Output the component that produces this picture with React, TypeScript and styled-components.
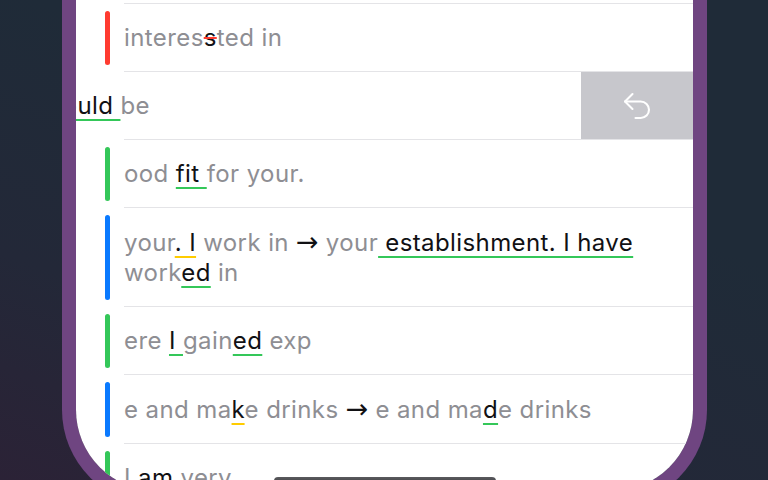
import styled, { createGlobalStyle } from "styled-components";
import { Undo2 } from "lucide-react";

type Kind = "plain" | "fix" | "style" | "del" | "mark" | "arrow";

interface Seg {
  t: string;
  k?: Kind;
}

interface Item {
  bar: string;
  segs: Seg[];
}

const RED = "#ff3b30";
const GREEN = "#34c759";
const BLUE = "#0a7aff";

const items: Item[] = [
  { bar: GREEN, segs: [{ t: "experience in customer service" }] },
  {
    bar: RED,
    segs: [{ t: "interes" }, { t: "s", k: "del" }, { t: "ted in" }],
  },
];

const after: Item[] = [
  {
    bar: GREEN,
    segs: [{ t: "ood " }, { t: "fit ", k: "fix" }, { t: "for your." }],
  },
  {
    bar: BLUE,
    segs: [
      { t: "your" },
      { t: ". I", k: "style" },
      { t: " work in " },
      { t: "→", k: "arrow" },
      { t: " your" },
      { t: " establishment. I have", k: "fix" },
      { t: " work" },
      { t: "ed", k: "fix" },
      { t: " in" },
    ],
  },
  {
    bar: GREEN,
    segs: [
      { t: "ere " },
      { t: "I ", k: "fix" },
      { t: "gain" },
      { t: "ed", k: "fix" },
      { t: " exp" },
    ],
  },
  {
    bar: BLUE,
    segs: [
      { t: "e and ma" },
      { t: "k", k: "style" },
      { t: "e drinks " },
      { t: "→", k: "arrow" },
      { t: " e and ma" },
      { t: "d", k: "fix" },
      { t: "e drinks" },
    ],
  },
  {
    bar: GREEN,
    segs: [{ t: "I " }, { t: "am", k: "mark" }, { t: " very" }],
  },
];

const GlobalStyle = createGlobalStyle`
  html, body {
    margin: 0;
    padding: 0;
  }
  body {
    width: 768px;
    height: 480px;
    overflow: hidden;
    background: linear-gradient(200deg, #1f2b38 35%, #232838 70%, #2b2236 100%);
    font-family: Inter, "Noto Sans", sans-serif;
    -webkit-font-smoothing: antialiased;
  }
`;

const Frame = styled.div`
  box-sizing: border-box;
  margin-left: 62px;
  width: 645px;
  height: 505px;
  border: 14px solid #6f4581;
  border-top: 0;
  border-radius: 0 0 95px 95px;
`;

const Screen = styled.div`
  position: relative;
  height: 100%;
  background: #fff;
  border-radius: 0 0 81px 81px;
  overflow: hidden;
`;

const List = styled.div`
  margin-top: -64px;
  display: flex;
  flex-direction: column;
`;

const Row = styled.div`
  display: flex;
  padding-left: 29px;
`;

const Bar = styled.div<{ $color: string }>`
  flex-shrink: 0;
  width: 5px;
  margin: 7px 14px 7px 0;
  border-radius: 3px;
  background: ${(p) => p.$color};
`;

const Text = styled.div`
  flex: 1;
  padding: 19px 16px 18px 0;
  border-bottom: 1px solid #e4e4e7;
  font-size: 24px;
  line-height: 30px;
  letter-spacing: 0.4px;
  color: #8e8e93;
`;

const Seg = styled.span<{ $kind: Kind }>`
  color: ${(p) => (p.$kind === "plain" ? "#8e8e93" : "#111114")};
  font-family: ${(p) =>
    p.$kind === "arrow" ? `"DejaVu Sans", sans-serif` : "inherit"};
  font-size: ${(p) => (p.$kind === "arrow" ? "27px" : "inherit")};
  letter-spacing: ${(p) => (p.$kind === "arrow" ? "0" : "inherit")};
  text-decoration-line: ${(p) =>
    p.$kind === "fix" || p.$kind === "style"
      ? "underline"
      : p.$kind === "del"
      ? "line-through"
      : "none"};
  text-decoration-color: ${(p) =>
    p.$kind === "style" ? "#ffcc00" : p.$kind === "del" ? RED : GREEN};
  text-decoration-thickness: 1.5px;
  text-underline-offset: 5px;
`;

const SwipeRow = styled.div`
  display: flex;
  height: 67px;
`;

const SwipeContent = styled.div`
  flex: 1;
  display: flex;
  align-items: center;
  overflow: hidden;
  font-size: 24px;
  line-height: 30px;
  letter-spacing: 0.4px;
`;

const SwipeText = styled.div`
  margin-left: -33px;
  white-space: nowrap;
`;

const Action = styled.div`
  width: 112px;
  display: flex;
  align-items: center;
  justify-content: center;
  background: #c7c7cc;
  color: #fff;
`;

const Divider = styled.div`
  height: 1px;
  margin-left: 48px;
  background: #e4e4e7;
`;

const HomeBar = styled.div`
  position: absolute;
  left: 50%;
  bottom: 6px;
  width: 222px;
  height: 8px;
  margin-left: -111px;
  border-radius: 4px;
  background: linear-gradient(#5a5a5e, #3a3a3d);
`;

const Segs = ({ segs }: { segs: Seg[] }) => (
  <>
    {segs.map((s, i) => (
      <Seg key={i} $kind={s.k ?? "plain"}>
        {s.t}
      </Seg>
    ))}
  </>
);

const ListRow = ({ item }: { item: Item }) => (
  <Row>
    <Bar $color={item.bar} />
    <Text>
      <Segs segs={item.segs} />
    </Text>
  </Row>
);

const App = () => {
  return (
    <>
      <GlobalStyle />
      <Frame>
        <Screen>
          <List>
            {items.map((it, i) => (
              <ListRow key={i} item={it} />
            ))}
            <SwipeRow>
              <SwipeContent>
                <SwipeText>
                  <Segs segs={[{ t: "would ", k: "fix" }, { t: "be" }]} />
                </SwipeText>
              </SwipeContent>
              <Action>
                <Undo2 size={36} strokeWidth={1.4} />
              </Action>
            </SwipeRow>
            <Divider />
            {after.map((it, i) => (
              <ListRow key={i} item={it} />
            ))}
          </List>
          <HomeBar />
        </Screen>
      </Frame>
    </>
  );
};

export default App;
